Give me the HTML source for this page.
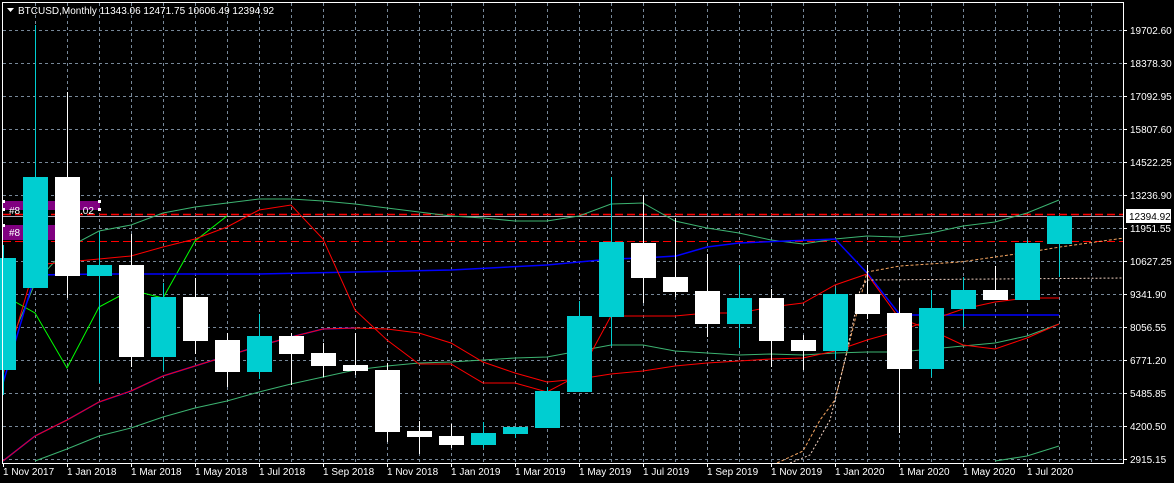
<!DOCTYPE html>
<html><head><meta charset="utf-8"><style>
html,body{margin:0;padding:0;background:#000;}
svg{display:block;}
text{font-family:"Liberation Sans",sans-serif;font-size:10px;fill:#fff;}
</style></head><body>
<svg width="1174" height="483" viewBox="0 0 1174 483" xmlns="http://www.w3.org/2000/svg">
<rect width="1174" height="483" fill="#000"/>
<g stroke="#778899" stroke-width="1" stroke-dasharray="3,3" fill="none">
<path d="M3 30.5H1123M3 63.5H1123M3 96.5H1123M3 129.5H1123M3 162.5H1123M3 195.5H1123M3 228.5H1123M3 261.5H1123M3 294.5H1123M3 327.5H1123M3 360.5H1123M3 393.5H1123M3 426.5H1123M3 459.5H1123"/>
<path d="M35.5 3V463M67.5 3V463M99.5 3V463M131.5 3V463M163.5 3V463M195.5 3V463M227.5 3V463M259.5 3V463M291.5 3V463M323.5 3V463M355.5 3V463M387.5 3V463M419.5 3V463M451.5 3V463M483.5 3V463M515.5 3V463M547.5 3V463M579.5 3V463M611.5 3V463M643.5 3V463M675.5 3V463M707.5 3V463M739.5 3V463M771.5 3V463M803.5 3V463M835.5 3V463M867.5 3V463M899.5 3V463M931.5 3V463M963.5 3V463M995.5 3V463M1027.5 3V463M1059.5 3V463M1091.5 3V463"/>
</g>
<line x1="3" y1="216.5" x2="1123" y2="216.5" stroke="#aab" stroke-width="1"/>
<line x1="3" y1="214.5" x2="1123" y2="214.5" stroke="#ff0000" stroke-width="1.5" stroke-dasharray="8,4"/>
<line x1="3" y1="241.5" x2="1123" y2="241.5" stroke="#ff0000" stroke-width="1" stroke-dasharray="8,4"/>
<!-- purple labels -->
<rect x="3" y="201" width="97" height="9" fill="#800080"/>
<rect x="3" y="225" width="52" height="15" fill="#800080"/>
<g fill="#fff"><rect x="2" y="200" width="3" height="3"/><rect x="98" y="200" width="3" height="3"/><rect x="98" y="208" width="3" height="3"/><rect x="2" y="208" width="3" height="3"/><rect x="2" y="224" width="3" height="3"/></g>
<text x="9" y="214">#8</text><text x="80" y="214">.02</text>
<text x="9" y="236">#8</text>
<g fill="none" stroke-width="1">
<polyline stroke="#3cb371" points="3,360 35,283 67,248 99,231 131,225 163,213 195,207 227,203 259,199 291,199 323,201 355,204 387,208 419,212 451,216 483,218 515,221 547,221 579,216 611,204 643,203 675,221 707,228 739,233 771,240 803,244 835,239 867,236 899,237 931,233 963,226 995,222 1027,213 1059,200"/>
<polyline stroke="#3cb371" points="35,461 67,449 99,436 131,428 163,417 195,408 227,401 259,392 291,384 323,377 355,370 387,366 419,363 451,362 483,360 515,358 547,357 579,351 611,345 643,345 675,351 707,353 739,355 771,354 803,355 835,353 867,352 899,352 931,349 963,346 995,343 1027,336 1059,324"/>
<polyline stroke="#3cb371" points="995,461 1027,456 1059,446"/>
<polyline stroke="#00ff00" points="3,295 35,313 67,368 99,307 131,290 163,298 195,241 227,216"/>
<polyline stroke="#0000ff" stroke-width="1.5" points="3,383 35,275 99,274 259,274 355,272 451,270 547,265 611,259 643,258 676,256 707,247 739,243 835,239 868,274 900,315 1059,315"/>
<polyline stroke="#0000ff" stroke-width="1.5" points="3,461 35,436 67,420 99,402 131,391 163,376 195,366 227,356 259,346 291,337 323,329 355,328"/>
<polyline stroke="#ff0000" points="3,461 35,436 67,420 99,402 131,391 163,376 195,366 227,356 259,346 291,337 323,329 355,328 387,329 419,333 451,343 483,362 515,373 547,382 579,379 611,374 643,371 675,366 707,363 739,361 771,359 803,358 835,351 867,340 899,331 931,320 963,309 995,302 1027,298 1059,298"/>
<polyline stroke="#ff0000" points="3,375 35,265 67,262 99,259 131,256 163,247 195,239 227,227 259,210 291,205 323,239 355,310 387,340 419,364 451,364 483,383 515,383 547,392 579,375 611,316 643,316 675,316 707,313 739,313 771,307 803,303 835,285 867,274 899,318 931,330 963,345 995,349 1027,338 1059,324"/>
<polyline stroke="#f4a460" stroke-dasharray="3,2" points="777,463 803,451 820,420 835,400 850,340 860,300 867,272 900,266 960,262 1030,252 1060,247 1124,238"/>
<polyline stroke="#f0d0c0" stroke-dasharray="2,2" points="790,463 810,455 830,420 845,360 860,290 867,280 1124,278"/>
</g>
<g stroke-width="1">
<path stroke="#00ced1" d="M3.5 245V395M35.5 25V288M99.5 232V383M163.5 283V371M259.5 314V379M483.5 422V448M515.5 427V438M547.5 387V428M579.5 301V392M611.5 177V346M739.5 265V348M835.5 288V359M931.5 290V377M963.5 277V327M1027.5 240V300M1059.5 216V277"/>
<path stroke="#fff" d="M67.5 92V298M131.5 234V367M195.5 278V354M227.5 333V387M291.5 333V385M323.5 343V377M355.5 333V375M387.5 363V442M419.5 421V454M451.5 424V448M643.5 195V303M675.5 218V297M707.5 254V337M771.5 289V367M803.5 335V370M867.5 265V319M899.5 298V433M995.5 266V300"/>
</g>
<g fill="#00ced1">
<rect x="0" y="258" width="16" height="112"/>
<rect x="23" y="177" width="25" height="111"/>
<rect x="87" y="265" width="25" height="11"/>
<rect x="151" y="297" width="25" height="60"/>
<rect x="247" y="336" width="25" height="36"/>
<rect x="471" y="433" width="25" height="12"/>
<rect x="503" y="427" width="25" height="7"/>
<rect x="535" y="391" width="25" height="37"/>
<rect x="567" y="316" width="25" height="76"/>
<rect x="599" y="242" width="25" height="75"/>
<rect x="727" y="298" width="25" height="26"/>
<rect x="823" y="294" width="25" height="57"/>
<rect x="919" y="308" width="25" height="61"/>
<rect x="951" y="290" width="25" height="19"/>
<rect x="1015" y="243" width="25" height="57"/>
<rect x="1047" y="216" width="25" height="28"/>
</g>
<g fill="#fff">
<rect x="55" y="177" width="25" height="99"/>
<rect x="119" y="265" width="25" height="92"/>
<rect x="183" y="297" width="25" height="44"/>
<rect x="215" y="340" width="25" height="32"/>
<rect x="279" y="336" width="25" height="18"/>
<rect x="311" y="353" width="25" height="13"/>
<rect x="343" y="365" width="25" height="6"/>
<rect x="375" y="370" width="25" height="62"/>
<rect x="407" y="431" width="25" height="6"/>
<rect x="439" y="436" width="25" height="9"/>
<rect x="631" y="243" width="25" height="35"/>
<rect x="663" y="277" width="25" height="15"/>
<rect x="695" y="291" width="25" height="33"/>
<rect x="759" y="298" width="25" height="43"/>
<rect x="791" y="340" width="25" height="11"/>
<rect x="855" y="294" width="25" height="20"/>
<rect x="887" y="313" width="25" height="56"/>
<rect x="983" y="290" width="25" height="10"/>
</g>
<path d="M2.5 3V463.5H1123.5V3M2 2.5H1124" stroke="#fff" fill="none"/>
<g stroke="#fff"><path d="M1123 30.5h4M1123 63.5h4M1123 96.5h4M1123 129.5h4M1123 162.5h4M1123 195.5h4M1123 228.5h4M1123 261.5h4M1123 294.5h4M1123 327.5h4M1123 360.5h4M1123 393.5h4M1123 426.5h4M1123 459.5h4"/>
<path d="M3.5 463v4M67.5 463v4M131.5 463v4M195.5 463v4M259.5 463v4M323.5 463v4M387.5 463v4M451.5 463v4M515.5 463v4M579.5 463v4M643.5 463v4M707.5 463v4M771.5 463v4M835.5 463v4M899.5 463v4M963.5 463v4M1027.5 463v4"/></g>
<g>
<text x="1130" y="34">19702.60</text><text x="1130" y="67">18378.30</text><text x="1130" y="100">17092.95</text><text x="1130" y="133">15807.60</text><text x="1130" y="166">14522.25</text><text x="1130" y="199">13236.90</text><text x="1130" y="232">11951.55</text><text x="1130" y="265">10627.25</text><text x="1130" y="298">9341.90</text><text x="1130" y="331">8056.55</text><text x="1130" y="364">6771.20</text><text x="1130" y="397">5485.85</text><text x="1130" y="430">4200.50</text><text x="1130" y="463">2915.15</text>
</g>
<rect x="1126" y="209" width="45" height="14" fill="#fff"/>
<text x="1129" y="220" style="fill:#000">12394.92</text>
<g>
<text x="3" y="475">1 Nov 2017</text><text x="67" y="475">1 Jan 2018</text><text x="131" y="475">1 Mar 2018</text><text x="195" y="475">1 May 2018</text><text x="259" y="475">1 Jul 2018</text><text x="323" y="475">1 Sep 2018</text><text x="387" y="475">1 Nov 2018</text><text x="451" y="475">1 Jan 2019</text><text x="515" y="475">1 Mar 2019</text><text x="579" y="475">1 May 2019</text><text x="643" y="475">1 Jul 2019</text><text x="707" y="475">1 Sep 2019</text><text x="771" y="475">1 Nov 2019</text><text x="835" y="475">1 Jan 2020</text><text x="899" y="475">1 Mar 2020</text><text x="963" y="475">1 May 2020</text><text x="1027" y="475">1 Jul 2020</text>
</g>
<path d="M7 8h7l-3.5 4z" fill="#fff"/>
<text x="18" y="14">BTCUSD,Monthly  11343.06 12471.75 10606.49 12394.92</text>
</svg>
</body></html>
